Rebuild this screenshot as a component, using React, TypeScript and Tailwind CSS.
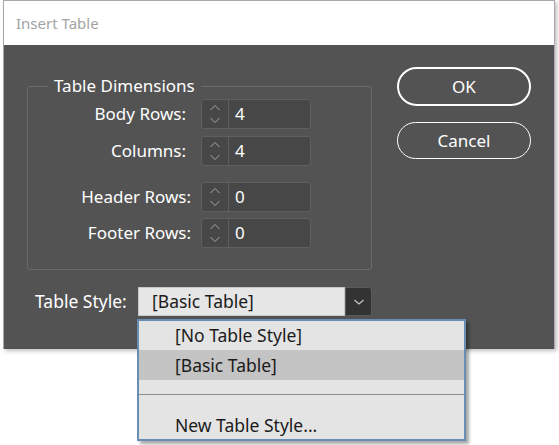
const font = { fontFamily: '"Noto Sans", "Open Sans", sans-serif' };

function Spinner({ value }: { value: string }) {
  return (
    <div className="flex h-[30px] w-[110px] rounded-[3px] border border-[#5f5f5f] bg-[#474747]">
      <div className="flex w-[27px] items-center justify-center border-r border-[#5f5f5f]">
        <svg width="14" height="22" viewBox="0 0 14 22" fill="none" stroke="#a8a8a8" strokeWidth="1">
          <polyline points="2.5,7 7,2.5 11.5,7" />
          <polyline points="2.5,15 7,19.5 11.5,15" />
        </svg>
      </div>
      <div className="flex flex-1 items-center pl-[6px] text-[17px] text-white">{value}</div>
    </div>
  );
}

function Row({ label, value, pad }: { label: string; value: string; pad: string }) {
  return (
    <div className="flex items-center">
      <div className={`w-[173px] text-right text-[17px] text-white ${pad}`}>{label}</div>
      <Spinner value={value} />
    </div>
  );
}

export default function App() {
  return (
    <div className="h-[445px] w-[559px] overflow-hidden bg-white" style={font}>
      <div className="relative ml-[3px] w-[552px] border-x border-t border-[#a9a9a9] shadow-[2px_2px_4px_rgba(0,0,0,0.25)]">
        <div className="flex h-[44px] items-center bg-white pl-[12px] text-[15px] text-[#a3a3a3]">Insert Table</div>
        <div className="flex h-[304px] bg-[#535353]">
          <div className="flex flex-col pl-[23px] pt-[41px]">
            <div className="relative h-[184px] w-[345px] rounded-[3px] border border-[#6b6b6b] pt-[12px]">
              <div className="absolute -top-[14px] left-[20px] bg-[#535353] px-[6px] text-[17px] text-white">Table Dimensions</div>
              <div className="flex flex-col gap-[7px]">
                <Row label="Body Rows:" value="4" pad="pr-[15px]" />
                <Row label="Columns:" value="4" pad="pr-[15px]" />
              </div>
              <div className="mt-[16px] flex flex-col gap-[6px]">
                <Row label="Header Rows:" value="0" pad="pr-[10px]" />
                <Row label="Footer Rows:" value="0" pad="pr-[10px]" />
              </div>
            </div>
            <div className="mt-[17px] flex items-center">
              <div className="w-[111px] pl-[8px] text-[17.5px] text-white">Table Style:</div>
              <div className="relative flex h-[29px] w-[234px]">
                <div className="flex flex-1 items-center border border-[#c8c8c8] bg-[#e6e6e6] pl-[13px] text-[17.5px] text-[#1b1b1b]">
                  [Basic Table]
                </div>
                <div className="flex w-[27px] items-center justify-center rounded-r-[3px] border border-[#5a5a5a] bg-[#333333]">
                  <svg width="12" height="8" viewBox="0 0 12 8" fill="none" stroke="#c8c8c8" strokeWidth="1.2">
                    <polyline points="1.5,2 6,6 10.5,2" />
                  </svg>
                </div>
                <div className="absolute left-[-1px] top-[32px] z-10 w-[329px] border-2 border-[#6a8db4] bg-[#e4e4e4] text-[17.5px] text-[#1b1b1b] shadow-[3px_3px_3px_rgba(0,0,0,0.35)]">
                  <div className="flex h-[29px] items-center pl-[36px]">[No Table Style]</div>
                  <div className="flex h-[30px] items-center bg-[#c4c4c4] pl-[36px]">[Basic Table]</div>
                  <div className="h-[14px]" />
                  <div className="h-px bg-[#8c8c8c]" />
                  <div className="flex h-[44px] items-center pl-[36px] pt-[16px]">New Table Style...</div>
                </div>
              </div>
            </div>
          </div>
          <div className="ml-auto flex flex-col gap-[16px] pr-[23px] pt-[22px]">
            <button className="h-[39px] w-[134px] rounded-full border-2 border-white text-[17px] text-white">OK</button>
            <button className="h-[37px] w-[134px] rounded-full border border-white text-[17px] text-white">Cancel</button>
          </div>
        </div>
      </div>
    </div>
  );
}
